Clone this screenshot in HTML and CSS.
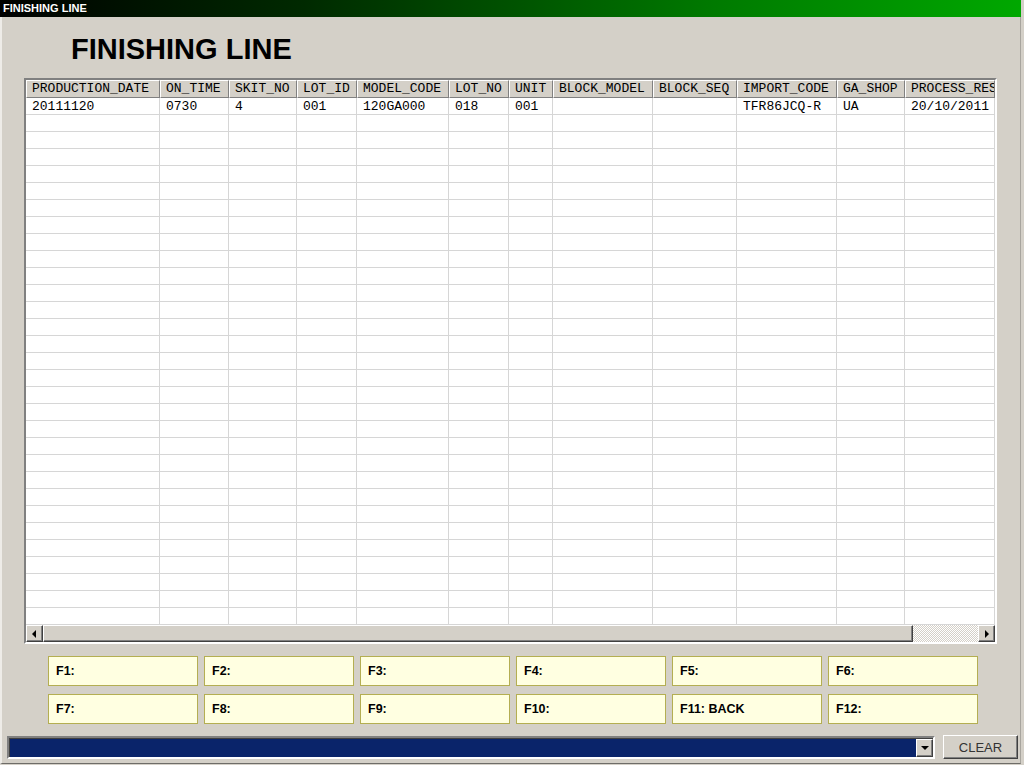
FILE: index.html
```html
<!DOCTYPE html>
<html>
<head>
<meta charset="utf-8">
<title>FINISHING LINE</title>
<link rel="stylesheet" href="styles.css">
</head>
<body>
<div class="window">
  <div class="titlebar">FINISHING LINE</div>
  <div class="client">
    <h1 class="heading">FINISHING LINE</h1>
    <div class="grid-box">
      <div class="grid-view">
        <table class="grid">
          <colgroup>
            <col class="c134"><col class="c69"><col class="c68"><col class="c60"><col class="c92"><col class="c60"><col class="c44"><col class="c100"><col class="c84"><col class="c100"><col class="c68"><col class="c90">
          </colgroup>
          <thead>
            <tr><th>PRODUCTION_DATE</th><th>ON_TIME</th><th>SKIT_NO</th><th>LOT_ID</th><th>MODEL_CODE</th><th>LOT_NO</th><th>UNIT</th><th>BLOCK_MODEL</th><th>BLOCK_SEQ</th><th>IMPORT_CODE</th><th>GA_SHOP</th><th>PROCESS_RESULT</th></tr>
          </thead>
          <tbody>
            <tr><td>20111120</td><td>0730</td><td>4</td><td>001</td><td>120GA000</td><td>018</td><td>001</td><td></td><td></td><td>TFR86JCQ-R</td><td>UA</td><td>20/10/2011</td></tr>
            <tr><td></td><td></td><td></td><td></td><td></td><td></td><td></td><td></td><td></td><td></td><td></td><td></td></tr>
            <tr><td></td><td></td><td></td><td></td><td></td><td></td><td></td><td></td><td></td><td></td><td></td><td></td></tr>
            <tr><td></td><td></td><td></td><td></td><td></td><td></td><td></td><td></td><td></td><td></td><td></td><td></td></tr>
            <tr><td></td><td></td><td></td><td></td><td></td><td></td><td></td><td></td><td></td><td></td><td></td><td></td></tr>
            <tr><td></td><td></td><td></td><td></td><td></td><td></td><td></td><td></td><td></td><td></td><td></td><td></td></tr>
            <tr><td></td><td></td><td></td><td></td><td></td><td></td><td></td><td></td><td></td><td></td><td></td><td></td></tr>
            <tr><td></td><td></td><td></td><td></td><td></td><td></td><td></td><td></td><td></td><td></td><td></td><td></td></tr>
            <tr><td></td><td></td><td></td><td></td><td></td><td></td><td></td><td></td><td></td><td></td><td></td><td></td></tr>
            <tr><td></td><td></td><td></td><td></td><td></td><td></td><td></td><td></td><td></td><td></td><td></td><td></td></tr>
            <tr><td></td><td></td><td></td><td></td><td></td><td></td><td></td><td></td><td></td><td></td><td></td><td></td></tr>
            <tr><td></td><td></td><td></td><td></td><td></td><td></td><td></td><td></td><td></td><td></td><td></td><td></td></tr>
            <tr><td></td><td></td><td></td><td></td><td></td><td></td><td></td><td></td><td></td><td></td><td></td><td></td></tr>
            <tr><td></td><td></td><td></td><td></td><td></td><td></td><td></td><td></td><td></td><td></td><td></td><td></td></tr>
            <tr><td></td><td></td><td></td><td></td><td></td><td></td><td></td><td></td><td></td><td></td><td></td><td></td></tr>
            <tr><td></td><td></td><td></td><td></td><td></td><td></td><td></td><td></td><td></td><td></td><td></td><td></td></tr>
            <tr><td></td><td></td><td></td><td></td><td></td><td></td><td></td><td></td><td></td><td></td><td></td><td></td></tr>
            <tr><td></td><td></td><td></td><td></td><td></td><td></td><td></td><td></td><td></td><td></td><td></td><td></td></tr>
            <tr><td></td><td></td><td></td><td></td><td></td><td></td><td></td><td></td><td></td><td></td><td></td><td></td></tr>
            <tr><td></td><td></td><td></td><td></td><td></td><td></td><td></td><td></td><td></td><td></td><td></td><td></td></tr>
            <tr><td></td><td></td><td></td><td></td><td></td><td></td><td></td><td></td><td></td><td></td><td></td><td></td></tr>
            <tr><td></td><td></td><td></td><td></td><td></td><td></td><td></td><td></td><td></td><td></td><td></td><td></td></tr>
            <tr><td></td><td></td><td></td><td></td><td></td><td></td><td></td><td></td><td></td><td></td><td></td><td></td></tr>
            <tr><td></td><td></td><td></td><td></td><td></td><td></td><td></td><td></td><td></td><td></td><td></td><td></td></tr>
            <tr><td></td><td></td><td></td><td></td><td></td><td></td><td></td><td></td><td></td><td></td><td></td><td></td></tr>
            <tr><td></td><td></td><td></td><td></td><td></td><td></td><td></td><td></td><td></td><td></td><td></td><td></td></tr>
            <tr><td></td><td></td><td></td><td></td><td></td><td></td><td></td><td></td><td></td><td></td><td></td><td></td></tr>
            <tr><td></td><td></td><td></td><td></td><td></td><td></td><td></td><td></td><td></td><td></td><td></td><td></td></tr>
            <tr><td></td><td></td><td></td><td></td><td></td><td></td><td></td><td></td><td></td><td></td><td></td><td></td></tr>
            <tr><td></td><td></td><td></td><td></td><td></td><td></td><td></td><td></td><td></td><td></td><td></td><td></td></tr>
            <tr><td></td><td></td><td></td><td></td><td></td><td></td><td></td><td></td><td></td><td></td><td></td><td></td></tr>
            <tr><td></td><td></td><td></td><td></td><td></td><td></td><td></td><td></td><td></td><td></td><td></td><td></td></tr>
          </tbody>
        </table>
      </div>
      <div class="hscroll">
        <div class="sb-btn"><span class="arrow-left"></span></div>
        <div class="sb-thumb"></div>
        <div class="sb-track"></div>
        <div class="sb-btn"><span class="arrow-right"></span></div>
      </div>
    </div>
    <div class="fkeys">
      <div class="fkey">F1:</div>
      <div class="fkey">F2:</div>
      <div class="fkey">F3:</div>
      <div class="fkey">F4:</div>
      <div class="fkey">F5:</div>
      <div class="fkey">F6:</div>
      <div class="fkey">F7:</div>
      <div class="fkey">F8:</div>
      <div class="fkey">F9:</div>
      <div class="fkey">F10:</div>
      <div class="fkey">F11: BACK</div>
      <div class="fkey">F12:</div>
    </div>
    <div class="bottombar">
      <div class="combo">
        <div class="combo-field"></div>
        <div class="combo-btn"><span class="arrow-down"></span></div>
      </div>
      <div class="btn-clear">CLEAR</div>
    </div>
  </div>
</div>
</body>
</html>
```
FILE: styles.css
```css
* { box-sizing: border-box; }
html, body { margin: 0; padding: 0; }
body {
  width: 1024px;
  height: 765px;
  background: #d4d0c8;
  font-family: "Liberation Sans", Arial, sans-serif;
  overflow: hidden;
}
.window {
  width: 1021px;
  height: 764px;
  display: flex;
  flex-direction: column;
}
.titlebar {
  height: 17px;
  flex: none;
  background: linear-gradient(to right, #000000 0%, #002a00 30%, #007a00 70%, #00a800 100%);
  color: #fff;
  font: bold 11px/17px "Liberation Sans", Arial, sans-serif;
  padding-left: 3px;
  white-space: nowrap;
}
.client {
  flex: 1;
  display: flex;
  flex-direction: column;
  border-left: 2px solid #eeece8;
  border-right: 1px solid #a8a59e;
  border-bottom: 1px solid #6e6c68;
}
.heading {
  margin: 16px 0 13px 69px;
  font: bold 29px/32px "Liberation Sans", Arial, sans-serif;
  color: #000;
}
.grid-box {
  margin-left: 22px;
  width: 973px;
  height: 566px;
  flex: none;
  border: 2px solid;
  border-color: #808080 #ffffff #ffffff #808080;
  display: flex;
  flex-direction: column;
  background: #fff;
}
.grid-view {
  flex: 1;
  overflow: hidden;
  background: #fff;
}
.grid {
  table-layout: fixed;
  border-collapse: separate;
  border-spacing: 0;
  width: 969px;
  font: 13px "Liberation Mono", "Courier New", monospace;
  color: #000;
}
.c134 { width: 134px; }
.c69 { width: 69px; }
.c68 { width: 68px; }
.c60 { width: 60px; }
.c92 { width: 92px; }
.c44 { width: 44px; }
.c100 { width: 100px; }
.c84 { width: 84px; }
.c90 { width: 90px; }
.grid th {
  height: 18px;
  padding: 0 0 0 5px;
  background: #d4d0c8;
  border-top: 1px solid #ffffff;
  border-left: 1px solid #ffffff;
  border-right: 1px solid #808080;
  border-bottom: 1px solid #808080;
  font-weight: normal;
  text-align: left;
  white-space: nowrap;
  overflow: hidden;
  line-height: 16px;
}
.grid td {
  height: 17px;
  padding: 1px 0 0 6px;
  border-right: 1px solid #d6d6d6;
  border-bottom: 1px solid #d6d6d6;
  white-space: nowrap;
  overflow: hidden;
  line-height: 15px;
}
.hscroll {
  height: 17px;
  flex: none;
  display: flex;
}
.sb-btn, .sb-thumb {
  background: #d4d0c8;
  border: 1px solid;
  border-color: #ffffff #404040 #404040 #ffffff;
  box-shadow: inset -1px -1px 0 #808080;
}
.sb-btn {
  width: 17px;
  display: flex;
  align-items: center;
  justify-content: center;
}
.sb-thumb { width: 870px; }
.sb-track {
  width: 65px;
  background-color: #ffffff;
  background-image: repeating-conic-gradient(#d4d0c8 0 25%, #ffffff 0 50%);
  background-size: 2px 2px;
}
.arrow-left {
  width: 0; height: 0;
  border-top: 4px solid transparent;
  border-bottom: 4px solid transparent;
  border-right: 4px solid #000;
  margin-left: -1px;
}
.arrow-right {
  width: 0; height: 0;
  border-top: 4px solid transparent;
  border-bottom: 4px solid transparent;
  border-left: 4px solid #000;
}
.fkeys {
  margin: 12px 0 0 46px;
  display: grid;
  grid-template-columns: repeat(6, 150px);
  grid-auto-rows: 30px;
  gap: 8px 6px;
}
.fkey {
  background: #ffffe1;
  border: 1px solid #b4ae52;
  font: bold 12.5px "Liberation Sans", Arial, sans-serif;
  color: #000;
  padding-left: 7px;
  display: flex;
  align-items: center;
}
.bottombar {
  margin: 11px 0 0 5px;
  display: flex;
  align-items: flex-start;
  gap: 8px;
}
.combo {
  margin-top: 1px;
  width: 928px;
  height: 23px;
  border: 2px solid;
  border-color: #808080 #ffffff #ffffff #808080;
  box-shadow: inset 1px 1px 0 #404040;
  display: flex;
}
.combo-field {
  flex: 1;
  background: #0a246a;
  margin: 1px 0 0 1px;
}
.combo-btn {
  width: 17px;
  margin-top: 1px;
  background: #d4d0c8;
  border: 1px solid;
  border-color: #ffffff #404040 #404040 #ffffff;
  box-shadow: inset -1px -1px 0 #808080;
  display: flex;
  align-items: center;
  justify-content: center;
}
.arrow-down {
  width: 0; height: 0;
  border-left: 4px solid transparent;
  border-right: 4px solid transparent;
  border-top: 4px solid #000;
}
.btn-clear {
  width: 75px;
  height: 24px;
  background: #d4d0c8;
  border: 1px solid;
  border-color: #ffffff #404040 #404040 #ffffff;
  box-shadow: inset -1px -1px 0 #808080;
  font: 13px "Liberation Sans", Arial, sans-serif;
  color: #333;
  display: flex;
  align-items: center;
  justify-content: center;
}
```
